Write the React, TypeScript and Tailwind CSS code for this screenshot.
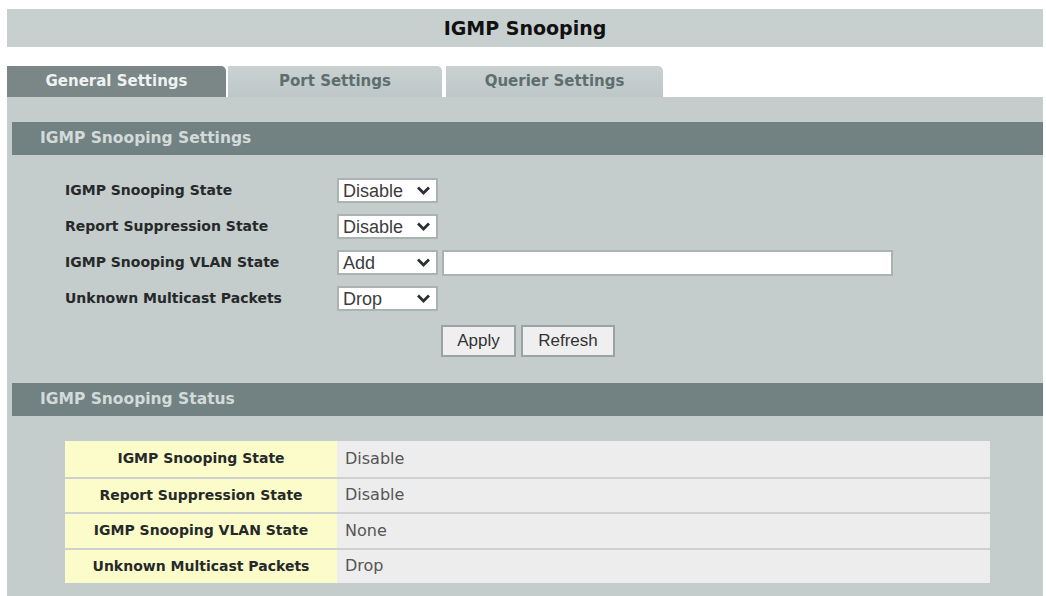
const dv = "font-['DejaVu_Sans',sans-serif]";
const lib = "font-['Liberation_Sans',Arial,sans-serif]";

const settings = [
  { label: 'IGMP Snooping State', value: 'Disable' },
  { label: 'Report Suppression State', value: 'Disable' },
  { label: 'IGMP Snooping VLAN State', value: 'Add', input: true },
  { label: 'Unknown Multicast Packets', value: 'Drop' },
];

const status = [
  { label: 'IGMP Snooping State', value: 'Disable' },
  { label: 'Report Suppression State', value: 'Disable' },
  { label: 'IGMP Snooping VLAN State', value: 'None' },
  { label: 'Unknown Multicast Packets', value: 'Drop' },
];

const Chevron = () => (
  <svg width="15" height="11" viewBox="0 0 15 11" className="shrink-0">
    <polyline points="2,2.5 7.5,8 13,2.5" fill="none" stroke="#2b2f33" strokeWidth="2.8" strokeLinejoin="miter" />
  </svg>
);

const FakeSelect = ({ value }: { value: string }) => (
  <div
    className={`${lib} flex h-[25px] w-[101px] items-center justify-between border-2 border-[#aab2b2] bg-white pl-[4px] pr-[5px] text-[18px] leading-none text-[#3c3c3c]`}
  >
    <span>{value}</span>
    <Chevron />
  </div>
);

const SectionHeader = ({ title }: { title: string }) => (
  <div className={`${dv} ml-[5px] flex h-[33px] items-center bg-[#728181] pl-[28px] text-[15.5px] font-bold text-[#d3dada]`}>
    {title}
  </div>
);

export default function App() {
  return (
    <div className="h-[596px] w-[1046px] overflow-hidden bg-white pl-[7px] pr-[3px] pt-[9px]">
      <div className={`${dv} flex h-[38px] items-center justify-center bg-[#c7cfcf] text-[19px] font-bold text-[#111]`}>
        IGMP Snooping
      </div>

      <div className={`${dv} mt-[19px] flex h-[31px] items-stretch text-[15px] font-bold`}>
        <div className="flex w-[219px] items-center justify-center rounded-tr-[5px] bg-[#7b8686] text-[#eef2f2]">
          General Settings
        </div>
        <div className="ml-[2px] flex w-[214px] items-center justify-center rounded-tr-[5px] bg-gradient-to-b from-[#c9d1d1] to-[#bec7c7] text-[#5d6e6e]">
          Port Settings
        </div>
        <div className="ml-[4px] flex w-[217px] items-center justify-center rounded-tr-[5px] bg-gradient-to-b from-[#c9d1d1] to-[#bec7c7] text-[#5d6e6e]">
          Querier Settings
        </div>
      </div>

      <div className="h-[499px] bg-[#c4cccc] pt-[25px]">
        <SectionHeader title="IGMP Snooping Settings" />

        <div className="flex flex-col gap-[11px] pl-[58px] pt-[23px]">
          {settings.map((s) => (
            <div key={s.label} className="flex h-[25px] items-center">
              <div className={`${dv} w-[272px] text-[14px] font-bold text-[#262929]`}>{s.label}</div>
              <FakeSelect value={s.value} />
              {s.input && <div className="ml-[4px] h-[26px] w-[451px] border-2 border-[#aab2b2] bg-white" />}
            </div>
          ))}
        </div>

        <div className={`${lib} mt-[14px] flex gap-[5px] pl-[434px] text-[17px] text-[#333]`}>
          <button className="h-[32px] w-[75px] border-2 border-[#9aa3a3] bg-[#efefef]">Apply</button>
          <button className="h-[32px] w-[94px] border-2 border-[#9aa3a3] bg-[#efefef]">Refresh</button>
        </div>

        <div className="mt-[26px]">
          <SectionHeader title="IGMP Snooping Status" />
        </div>

        <div className="ml-[58px] mt-[25px] w-[925px]">
          {status.map((s, i) => (
            <div
              key={s.label}
              className={`flex h-[35.5px] ${i > 0 ? 'border-t-2 border-[#cfd1d1]' : ''}`}
            >
              <div className={`${dv} flex w-[272px] items-center justify-center bg-[#fcfccb] text-[14px] font-bold text-[#262929]`}>
                {s.label}
              </div>
              <div className={`${dv} flex flex-1 items-center bg-[#ededed] pl-[8px] text-[16px] text-[#555]`}>
                {s.value}
              </div>
            </div>
          ))}
        </div>
      </div>
    </div>
  );
}
